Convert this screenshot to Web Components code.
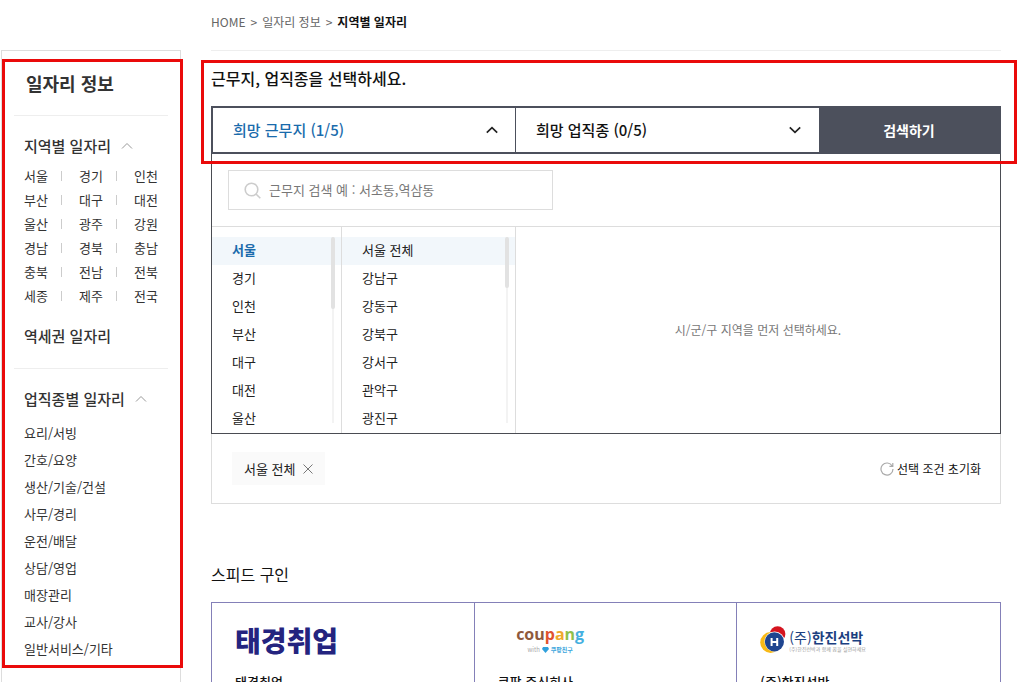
<!DOCTYPE html>
<html lang="ko">
<head>
<meta charset="utf-8">
<meta name="viewport" content="width=device-width, initial-scale=1">
<title>지역별 일자리</title>
<style>
    body {
        margin: 0;
        height: 100vh;
        overflow: hidden;
        background: #fff;
        color: #333;
        font: 13px/24px "Noto Sans CJK KR", sans-serif;
    }
</style>
</head>
<body>
<job-page>
    <side-menu slot="side"></side-menu>
    <bread-crumb></bread-crumb>
    <marked-area>
        <search-bar></search-bar>
    </marked-area>
    <region-picker></region-picker>
    <selected-filters></selected-filters>
    <speed-jobs>
        <job-card name="태경취업"><logo-taekyung></logo-taekyung></job-card>
        <job-card name="쿠팡 주식회사"><logo-coupang></logo-coupang></job-card>
        <job-card name="(주)한진선박"><logo-hanjin></logo-hanjin></job-card>
    </speed-jobs>
</job-page>

<script>
const RESET = `
    * { box-sizing: border-box; }
    ul, ol { list-style: none; margin: 0; padding: 0; }
    h1, h2, h3, p { margin: 0; }
    a { color: inherit; text-decoration: none; }
    button, input { margin: 0; font: inherit; color: inherit; border: 0; background: none; border-radius: 0; }
    button { padding: 0; cursor: pointer; }
    svg { display: block; flex: none; }
`;

function define(name, render) {
    customElements.define(name, class extends HTMLElement {
        constructor() {
            super();
            const template = document.createElement('template');
            template.innerHTML = render(this);
            this.attachShadow({ mode: 'open' });
            this.shadowRoot.append(template.content.cloneNode(true));
        }
    });
}

define('job-page', () => `
    <style>
        ${RESET}
        :host {
            display: grid;
            grid-template-columns: 180px minmax(0, 1fr);
            column-gap: 30px;
            padding: 0 16px 0 1px;
        }
    </style>
    <slot name="side"></slot>
    <main><slot></slot></main>
`);

// red outline drawn around whatever is slotted in
define('marked-area', () => `
    <style>
        :host { display: block; position: relative; }
        .frame {
            position: absolute;
            inset: 9px -16px -10px -10px;
            border: 3px solid #ea0a0a;
            pointer-events: none;
            z-index: 2;
        }
    </style>
    <slot></slot>
    <div class="frame"></div>
`);

const REGIONS = ['서울', '경기', '인천', '부산', '대구', '대전', '울산', '광주', '강원',
    '경남', '경북', '충남', '충북', '전남', '전북', '세종', '제주', '전국'];
const JOBS = ['요리/서빙', '간호/요양', '생산/기술/건설', '사무/경리', '운전/배달',
    '상담/영업', '매장관리', '교사/강사', '일반서비스/기타'];
const FOLD = `<svg width="12" height="8" viewBox="0 0 12 8" fill="none" stroke="#999"><path d="M1 6.5 6 1.5l5 5"/></svg>`;

define('side-menu', () => `
    <style>
        ${RESET}
        :host {
            display: block;
            position: relative;
            box-sizing: border-box;
            margin-top: 50px;
            padding: 0 12px;
            height: 700px;
            border: 1px solid #ddd;
        }
        .frame {
            position: absolute;
            inset: 8px -3px 81px 0;
            border: 3px solid #ea0a0a;
            pointer-events: none;
        }
        h1 {
            padding: 20px 12px;
            font-size: 18px;
            font-weight: 700;
            line-height: 24px;
            border-bottom: 1px solid #eee;
        }
        h2 {
            display: flex;
            align-items: center;
            gap: 10px;
            font-size: 15px;
            font-weight: 500;
        }
        section { padding: 18px 10px 20px; }
        section + section { border-top: 1px solid #eee; }
        .regions {
            display: grid;
            grid-template-columns: repeat(3, 55px);
            padding: 6px 0 16px;
        }
        .regions li { display: flex; align-items: center; gap: 13px; }
        .regions li:not(:nth-child(3n))::after {
            content: "";
            width: 1px;
            height: 10px;
            background: #ccc;
        }
        .jobs { padding-top: 8px; line-height: 27px; }
    </style>
    <h1>일자리 정보</h1>
    <nav>
        <section>
            <h2><a href="#">지역별 일자리</a>${FOLD}</h2>
            <ul class="regions">${REGIONS.map(r => `<li><a href="#">${r}</a></li>`).join('')}</ul>
            <h2><a href="#">역세권 일자리</a></h2>
        </section>
        <section>
            <h2><a href="#">업직종별 일자리</a>${FOLD}</h2>
            <ul class="jobs">${JOBS.map(j => `<li><a href="#">${j}</a></li>`).join('')}</ul>
        </section>
    </nav>
    <div class="frame"></div>
`);

define('bread-crumb', () => `
    <style>
        ${RESET}
        :host { display: block; padding: 10px 0 16px; border-bottom: 1px solid #eee; color: #666; font-size: 12px; }
        ol { display: flex; }
        li + li::before { content: ">"; margin: 0 5px; color: #666; font-weight: 400; }
        li:last-child { color: #111; font-weight: 700; }
    </style>
    <ol>
        <li><a href="#">HOME</a></li>
        <li><a href="#">일자리 정보</a></li>
        <li>지역별 일자리</li>
    </ol>
`);

define('search-bar', () => `
    <style>
        ${RESET}
        h2 { padding: 15px 0 16px; color: #111; font-size: 16px; font-weight: 500; }
        .bar {
            display: grid;
            grid-template-columns: 1fr 1fr 180px;
            height: 48px;
            border: 2px solid #4c505c;
            background: #4c505c;
            color: #111;
        }
        button { font-size: 15px; font-weight: 500; }
        .tab {
            display: flex;
            align-items: center;
            justify-content: space-between;
            padding: 0 18px 0 20px;
            background: #fff;
        }
        .tab[aria-expanded="true"] { padding-right: 17px; border-right: 1px solid #4c505c; color: #1a6bac; }
        .go { color: #fff; font-size: 14px; font-weight: 700; }
    </style>
    <h2>근무지, 업직종을 선택하세요.</h2>
    <div class="bar">
        <button class="tab" type="button" aria-expanded="true">희망 근무지 (1/5)
            <svg width="12" height="8" viewBox="0 0 12 8" fill="none" stroke="#222" stroke-width="1.7"><path d="m.8 6.6 5.2-5 5.2 5"/></svg>
        </button>
        <button class="tab" type="button" aria-expanded="false">희망 업직종 (0/5)
            <svg width="12" height="8" viewBox="0 0 12 8" fill="none" stroke="#222" stroke-width="1.7"><path d="m.8 1.4 5.2 5 5.2-5"/></svg>
        </button>
        <button class="go" type="submit">검색하기</button>
    </div>
`);

define('region-picker', () => `
    <style>
        ${RESET}
        :host { display: block; border: 1px solid #4a4c52; border-top: 0; }
        .search { padding: 16px; }
        label {
            display: flex;
            align-items: center;
            gap: 8px;
            width: 325px;
            height: 40px;
            padding: 0 15px;
            border: 1px solid #ddd;
        }
        input { flex: 1; min-width: 0; padding: 0; outline: 0; }
        input::placeholder { color: #777; opacity: 1; }
        .lists {
            display: grid;
            grid-template-columns: 130px 174px 1fr;
            border-top: 1px solid #ddd;
        }
        .empty { display: grid; place-content: center; color: #777; font-size: 12px; }
    </style>
    <div class="search">
        <label>
            <svg width="17" height="17" viewBox="0 0 17 17" fill="none" stroke="#ccc" stroke-width="1.6"><circle cx="7.5" cy="7.5" r="6.3"/><path d="m12 12 4.3 4.3"/></svg>
            <input type="text" aria-label="근무지 검색" placeholder="근무지 검색 예 : 서초동,역삼동">
        </label>
    </div>
    <div class="lists">
        <option-list class="city" items="서울,경기,인천,부산,대구,대전,울산" thumb="72"></option-list>
        <option-list class="district" items="서울 전체,강남구,강동구,강북구,강서구,관악구,광진구" thumb="51"></option-list>
        <p class="empty">시/군/구 지역을 먼저 선택하세요.</p>
    </div>
`);

// items and thumb attributes are read when the list is connected
customElements.define('option-list', class extends HTMLElement {
    constructor() {
        super();
        this.attachShadow({ mode: 'open' });
    }

    connectedCallback() {
        const items = this.getAttribute('items').split(',');
        this.shadowRoot.innerHTML = `
            <style>
                ${RESET}
                :host {
                    display: block;
                    position: relative;
                    padding-top: 10px;
                    border-right: 1px solid #ddd;
                    color: #222;
                }
                button { display: block; width: 100%; height: 28px; padding: 0 20px 2px; text-align: left; }
                .on { background: #f2f7fb; }
                :host(.city) .on { color: #1a6bac; font-weight: 700; }
                .rail {
                    position: absolute;
                    top: 10px;
                    right: 7px;
                    bottom: 10px;
                    width: 2px;
                    background: #f3f3f3;
                }
                .thumb {
                    width: 4px;
                    height: ${this.getAttribute('thumb')}px;
                    margin-left: -1px;
                    border-radius: 2px;
                    background: #e2e2e2;
                }
            </style>
            <ul>${items.map((item, i) => `<li><button type="button" class="${i ? '' : 'on'}">${item}</button></li>`).join('')}</ul>
            <div class="rail"><div class="thumb"></div></div>
        `;
    }
});

define('selected-filters', () => `
    <style>
        ${RESET}
        :host {
            display: flex;
            align-items: center;
            justify-content: space-between;
            padding: 18px 19px 18px 20px;
            border: 1px solid #ddd;
            border-top: 0;
            color: #222;
        }
        .chip {
            display: flex;
            align-items: center;
            gap: 8px;
            height: 33px;
            padding: 0 12px;
            background: #fafafa;
        }
        .reset { display: flex; align-items: center; gap: 3px; color: #111; font-size: 12px; }
    </style>
    <button class="chip" type="button">서울 전체
        <svg width="10" height="10" viewBox="0 0 10 10" fill="none" stroke="#777"><path d="m.5.5 9 9M9.5.5l-9 9"/></svg>
    </button>
    <button class="reset" type="button">
        <svg width="14" height="14" viewBox="0 0 14 14" fill="none" stroke="#aaa" stroke-width="1.2"><path d="M12.2 4A6 6 0 1 0 13 7M12.8 1v3.4H9.4"/></svg>
        선택 조건 초기화
    </button>
`);

define('speed-jobs', () => `
    <style>
        ${RESET}
        :host { display: block; padding-top: 58px; }
        h2 { padding-bottom: 16px; color: #111; font-size: 16px; font-weight: 400; }
        .cards {
            display: grid;
            grid-template-columns: repeat(3, 1fr);
            border: 1px solid #8480b8;
        }
    </style>
    <h2>스피드 구인</h2>
    <div class="cards"><slot></slot></div>
`);

define('job-card', el => `
    <style>
        ${RESET}
        :host { display: block; padding: 7px 23px 40px; color: #111; }
        :host(:not(:last-child)) { border-right: 1px solid #8480b8; }
        .logo { display: flex; align-items: center; width: 105px; height: 60px; }
        h3 { font-size: 13px; font-weight: 500; }
    </style>
    <div class="logo"><slot></slot></div>
    <h3><a href="#">${el.getAttribute('name')}</a></h3>
`);

define('logo-taekyung', () => `
    <style>
        :host { color: #24247f; font-size: 28px; font-weight: 900; line-height: 40px; white-space: nowrap; }
    </style>
    태경취업
`);

define('logo-coupang', () => `
    <style>
        ${RESET}
        :host { display: block; width: 100%; text-align: center; }
        .word { font: 700 16px/20px "Open Sans", sans-serif; }
        .c1 { color: #8f5a3c; }
        .c2 { color: #e0532f; }
        .c3 { color: #f0a92c; }
        .c4 { color: #8fc04a; }
        .c5 { color: #45b0e0; }
        .sub {
            display: flex;
            align-items: center;
            justify-content: center;
            gap: 2px;
            color: #aaa;
            font-size: 6px;
            line-height: 12px;
        }
        b { color: #3aa5dc; }
    </style>
    <div class="word"><span class="c1">cou</span><span class="c2">p</span><span class="c3">a</span><span class="c4">n</span><span class="c5">g</span></div>
    <div class="sub">with
        <svg width="7" height="6" viewBox="0 0 7 6" fill="#2fa0dc"><path d="M1 0h5l1 2-3.5 4L0 2z"/></svg>
        <b>쿠팡친구</b>
    </div>
`);

define('logo-hanjin', () => `
    <style>
        ${RESET}
        :host { display: flex; align-items: center; gap: 3px; white-space: nowrap; }
        .word { color: #1b3f80; font-size: 14px; line-height: 18px; }
        .sub { color: #999; font-size: 5px; line-height: 6px; }
    </style>
    <svg width="26" height="28" viewBox="0 0 26 28">
        <circle cx="17.6" cy="8" r="7.8" fill="#d5141f"/>
        <circle cx="10.6" cy="16.5" r="10.4" fill="#f8b916"/>
        <circle cx="14.6" cy="15.6" r="10.2" fill="#fff"/>
        <circle cx="14.4" cy="15.8" r="9.6" fill="#1f4590"/>
        <path d="M11.6 12v8M17.2 12v8M11.6 16h5.6" fill="none" stroke="#fff" stroke-width="2"/>
    </svg>
    <div>
        <div class="word">(주)<b>한진선박</b></div>
        <div class="sub">(주)한진선박과 함께 꿈을 실현하세요</div>
    </div>
`);
</script>
</body>
</html>
